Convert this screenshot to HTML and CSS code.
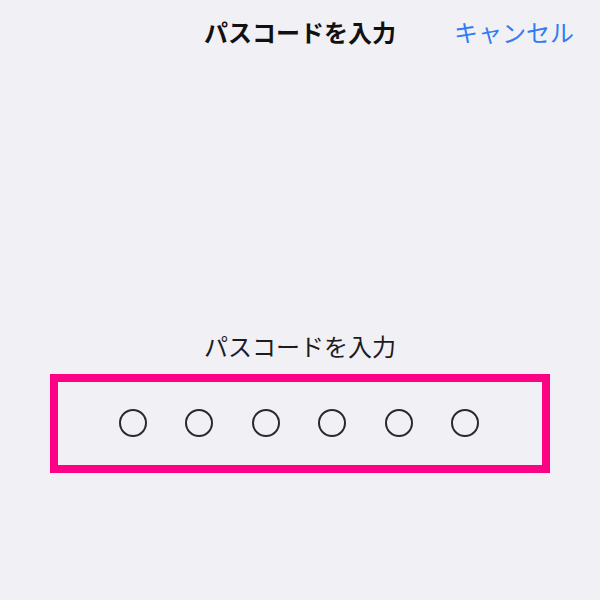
FILE: index.html
```html
<!DOCTYPE html>
<html lang="ja">
<head>
<meta charset="utf-8">
<title>パスコードを入力</title>
<link rel="stylesheet" href="styles.css">
</head>
<body>
  <header class="nav">
    <span class="nav-spacer"></span>
    <h1 class="nav-title">パスコードを入力</h1>
    <button class="nav-cancel" type="button">キャンセル</button>
  </header>
  <main class="passcode">
    <p class="passcode-label">パスコードを入力</p>
    <div class="passcode-frame">
      <div class="dots">
        <span class="dot"></span>
        <span class="dot"></span>
        <span class="dot"></span>
        <span class="dot"></span>
        <span class="dot"></span>
        <span class="dot"></span>
      </div>
    </div>
  </main>
</body>
</html>
```
FILE: styles.css
```css
html, body {
  margin: 0;
  padding: 0;
}

body {
  width: 600px;
  height: 600px;
  background: #f1f0f5;
  font-family: "Noto Sans CJK JP", "Noto Sans", sans-serif;
  color: #1c1c1e;
  overflow: hidden;
}

.nav {
  display: grid;
  grid-template-columns: 1fr auto 1fr;
  align-items: center;
  height: 64px;
}

.nav-title {
  margin: 0;
  font-size: 24px;
  font-weight: 700;
  line-height: 30px;
  color: #111;
}

.nav-cancel {
  justify-self: end;
  margin-right: 26px;
  padding: 0;
  border: 0;
  background: none;
  font: inherit;
  font-size: 24px;
  line-height: 30px;
  color: #2f7cf6;
}

.passcode {
  display: flex;
  flex-direction: column;
  align-items: center;
  padding-top: 267px;
}

.passcode-label {
  margin: 0;
  font-size: 24px;
  line-height: 30px;
  color: #1c1c1e;
}

.passcode-frame {
  box-sizing: border-box;
  width: 500px;
  height: 99px;
  margin-top: 13px;
  border: 8px solid #fe0286;
  display: flex;
  align-items: center;
  justify-content: center;
}

.dots {
  display: flex;
  gap: 38.4px;
  margin: -2px 0 0 -2px;
}

.dot {
  box-sizing: border-box;
  width: 28px;
  height: 28px;
  border: 2px solid #2a2a2c;
  border-radius: 50%;
}
```
